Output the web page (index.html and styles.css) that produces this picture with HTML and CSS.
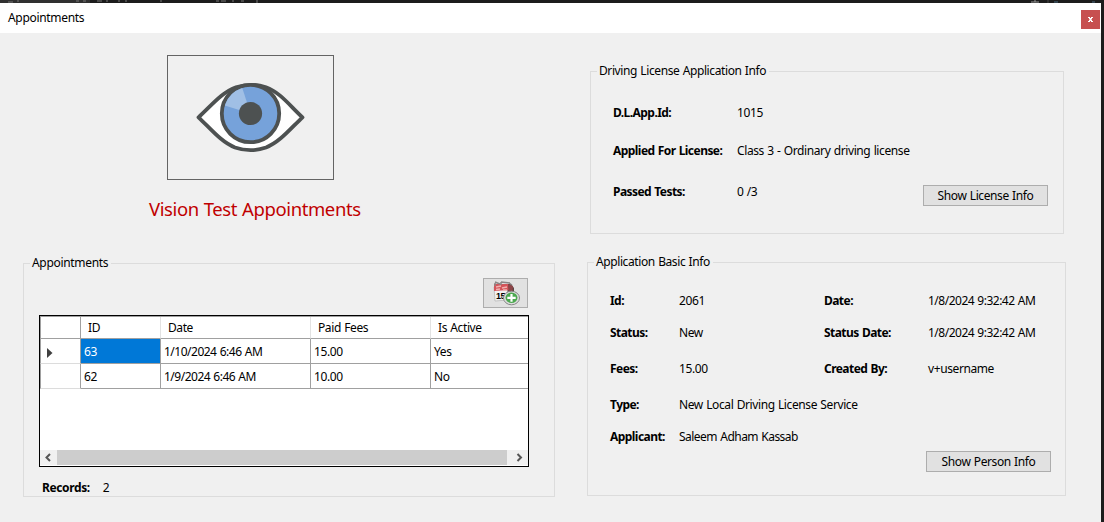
FILE: index.html
```html
<!DOCTYPE html>
<html lang="en">
<head>
<meta charset="utf-8">
<title>Appointments</title>
<link rel="stylesheet" href="styles.css">
</head>
<body>
<div class="backdrop">
  <svg class="backdrop-top" width="1104" height="3" viewBox="0 0 1104 3">
    <path d="M0 0H90V3H0z" fill="#303030"/>
    <path d="M8 2h5M17 1h2M76 1h3M83 1h3M97 1h5M106 1h2M118 1h2M125 1h2M161 0v2M216 1h3M221 1h5M232 1h2M241 1h3M257 0v3" stroke="#777"/>
    <path d="M1031 2h8M1034 1h2" stroke="#999"/>
    <path d="M1048 0v3" stroke="#444"/>
    <path d="M1054 2h4M1092 2h3" stroke="#4b6a80"/>
  </svg>
  <div class="window">
    <header class="titlebar">
      <span class="caption">Appointments</span>
      <button class="close" aria-label="Close"><svg width="19" height="19" viewBox="0 0 19 19"><path d="M7 7.500h2M10 7.500h2M7 11.500h2M10 11.500h2M8 8.500h3M8.500 9.500h2M8 10.500h3" stroke="#fff" fill="none"/></svg></button>
    </header>
    <main class="content">
      <section class="left">
        <div class="picture">
          <svg width="165" height="123" viewBox="168 56 165 123">
            <path d="M198.500 117.300C210 107 222 92 236 87.200C246 84 256 84 266 87.200C280 92 291 107 302.500 117.300C291 128 280 142 266 147.500C256 151 245 151 235 147.500C221 142 210 128 198.500 117.300Z" fill="#fff" stroke="#4d5151" stroke-width="3.800" stroke-linejoin="round"/>
            <path d="M229 92C240 82 261 82 272 92L266 96H235Z" fill="#4d5151"/>
            <circle cx="250.500" cy="113.500" r="28.700" fill="#76a2da" stroke="#4d5151" stroke-width="3.800"/>
            <path d="M250.500 113.500L224.800 105.500A27 27 0 0 1 242.300 88Z" fill="#a0bfe5"/>
            <circle cx="250.500" cy="113.500" r="11.600" fill="#4d5151"/>
          </svg>
        </div>
        <h1 class="heading">Vision Test Appointments</h1>
        <fieldset class="group appointments">
          <legend>Appointments</legend>
          <button class="add" aria-label="Add appointment">
            <svg width="30" height="26" viewBox="0 0 30 26">
              <path d="M4 4L20 4L23 8V19L4 20Z" fill="#5f4444"/>
              <path d="M3 7L16 6L17 20L4 21Z" fill="#f2f2f2" stroke="#aaa" stroke-width=".6"/>
              <path d="M3 4L17 4L18 10L3 11Z" fill="#d3545a"/>
              <path d="M17 4L22 6L21 17L18 17Z" fill="#8d4548"/>
              <path d="M5 7l5-1M11 8l5-1M5 9.500l4-.5M12 10h4" stroke="#f2b0af" stroke-width="1.300"/>
              <path d="M4 2l5 2M10 2l9 1M4 3v3M10 2v3M18 3l3 2" stroke="#8a8585" stroke-width="1.500"/>
              <text x="5" y="19" class="cal-day">15</text>
              <ellipse cx="20.500" cy="18" rx="8" ry="6.800" fill="#ddd" stroke="#888"/>
              <ellipse cx="20.500" cy="17.800" rx="6" ry="5.200" fill="#4da850"/>
              <path d="M16.300 17.800h8.400M20.500 13.900v7.800" stroke="#fff" stroke-width="2.200"/>
            </svg>
          </button>
          <div class="datagrid">
            <div class="row head"><span></span><span>ID</span><span>Date</span><span>Paid Fees</span><span>Is Active</span></div>
            <div class="row"><span class="marker"><svg width="6" height="10" viewBox="0 0 6 10"><path d="M0 0L5.500 5L0 10Z" fill="#404040"/></svg></span><span class="selected">63</span><span class="date">1/10/2024 6:46 AM</span><span>15.00</span><span>Yes</span></div>
            <div class="row"><span></span><span>62</span><span class="date">1/9/2024 6:46 AM</span><span>10.00</span><span>No</span></div>
            <div class="scrollbar">
              <svg width="17" height="15" viewBox="0 0 17 15"><path d="M10 4L6.500 7.500L10 11" fill="none" stroke="#555" stroke-width="2"/></svg>
              <div class="thumb"></div>
              <svg width="21" height="15" viewBox="0 0 21 15"><path d="M10.500 4L14 7.500L10.500 11" fill="none" stroke="#555" stroke-width="2"/></svg>
            </div>
          </div>
          <div class="records"><b>Records:</b><span>2</span></div>
        </fieldset>
      </section>
      <section class="right">
        <fieldset class="group license">
          <legend>Driving License Application Info</legend>
          <dl class="fields license-fields">
            <dt>D.L.App.Id:</dt><dd>1015</dd>
            <dt>Applied For License:</dt><dd>Class 3 - Ordinary driving license</dd>
            <dt>Passed Tests:</dt><dd>0 /3</dd>
          </dl>
          <button class="btn">Show License Info</button>
        </fieldset>
        <fieldset class="group basic">
          <legend>Application Basic Info</legend>
          <dl class="fields basic-fields">
            <dt>Id:</dt><dd>2061</dd><dt>Date:</dt><dd class="date">1/8/2024 9:32:42 AM</dd>
            <dt>Status:</dt><dd>New</dd><dt>Status Date:</dt><dd class="date">1/8/2024 9:32:42 AM</dd>
            <dt>Fees:</dt><dd>15.00</dd><dt>Created By:</dt><dd>v+username</dd>
            <dt>Type:</dt><dd class="wide">New Local Driving License Service</dd>
            <dt>Applicant:</dt><dd class="wide name">Saleem Adham Kassab</dd>
          </dl>
          <button class="btn">Show Person Info</button>
        </fieldset>
      </section>
    </main>
  </div>
</div>
</body>
</html>
```
FILE: styles.css
```css
* { box-sizing: border-box; }
body {
  margin: 0;
  font: 12px/16px "Noto Sans", "Open Sans", sans-serif;
  letter-spacing: -0.4px;
  word-spacing: 0.6px;
  color: #000;
}
button { font: inherit; letter-spacing: inherit; word-spacing: inherit; color: inherit; padding: 0; }
svg { display: block; }
.backdrop { width: 1104px; height: 522px; background: #1c1c1c; overflow: hidden; }
.window { width: 1101px; height: 519px; background: #f0f0f0; }
.titlebar {
  height: 30px;
  background: #fff;
  display: flex;
  justify-content: space-between;
  padding: 7px 1px 0 8px;
}
.caption, .appointments legend { letter-spacing: -0.32px; }
.close { width: 19px; height: 19px; background: #c75050; border: 0; }
.content { display: flex; }
.left { width: 532px; margin-left: 23px; }
.picture { width: 167px; height: 125px; margin: 22px 0 0 144px; border: 1px solid #646464; }
.heading {
  margin: 15px 0 0 126px;
  font-size: 18.5px;
  line-height: 28px;
  font-weight: 400;
  letter-spacing: -0.4px;
  color: #c00000;
}
.group { margin: 0; min-width: 0; border: 1px solid #dcdcdc; padding: 0 0 0 6px; }
.group legend { padding: 0 3px 0 2px; height: 16px; }
.appointments { height: 242px; margin-top: 32px; }
.add {
  display: flex;
  align-items: center;
  justify-content: center;
  width: 45px;
  height: 30px;
  margin: 7px 0 7px 453px;
  background: #e1e1e1;
  border: 1px solid #adadad;
}
.cal-day { font: bold 9px "Liberation Sans", sans-serif; letter-spacing: -0.5px; }
.datagrid {
  display: flex;
  flex-direction: column;
  width: 490px;
  height: 152px;
  margin-left: 9px;
  border: 1px solid #000;
  background: #fff;
}
.row { display: grid; grid-template-columns: 41px 80px 150px 120px 1fr; height: 25px; }
.row span {
  border-right: 1px solid #a0a0a0;
  border-bottom: 1px solid #a0a0a0;
  padding: 5px 0 0 3px;
}
.row span:first-child { border-left: 1px solid #a0a0a0; border-bottom-color: #dcdcdc; }
.row span:last-child { border-right: 0; }
.row.head { height: 23px; border-top: 1px solid #a0a0a0; }
.row.head span { padding: 3px 0 0 7px; border-right-color: #e2e2e2; }
.row.head span:first-child { border-right-color: #a0a0a0; border-bottom-color: #a0a0a0; }
.row .marker { padding: 9px 0 0 6px; }
.row .selected { background: #0078d7; color: #fff; }
.date { letter-spacing: -0.5px; }
.scrollbar { display: flex; height: 15px; margin: auto 0 1px; background: #f0f0f0; }
.thumb { flex: 1; background: #cdcdcd; }
.records { display: flex; gap: 13px; margin: 13px 0 0 12px; }
.fields { display: grid; margin: 0; }
.fields dt { font-weight: 700; }
.fields dd { margin: 0; }
.fields dt, b { letter-spacing: -0.55px; }
.records b { letter-spacing: -0.38px; }
.right { width: 479px; margin: 30px 0 0 32px; }
.license { width: 474px; height: 171px; margin-left: 3px; }
.license-fields {
  grid-template-columns: 124px 1fr;
  grid-template-rows: 38px 41px 16px;
  margin: 26px 0 0 16px;
}
.btn {
  display: block;
  width: 125px;
  height: 21px;
  line-height: 18px;
  background: #e1e1e1;
  border: 1px solid #adadad;
}
.license .btn { margin: -15px 0 0 326px; }
.basic { width: 479px; height: 242px; margin-top: 20px; }
.basic-fields {
  grid-template-columns: 69px 145px 104px 1fr;
  grid-template-rows: 32px 36px 36px 32px 16px;
  margin: 23px 0 0 16px;
}
.wide { grid-column: 2 / -1; }
.name { letter-spacing: -0.52px; }
.basic .btn { margin: 6px 0 0 332px; }
```
